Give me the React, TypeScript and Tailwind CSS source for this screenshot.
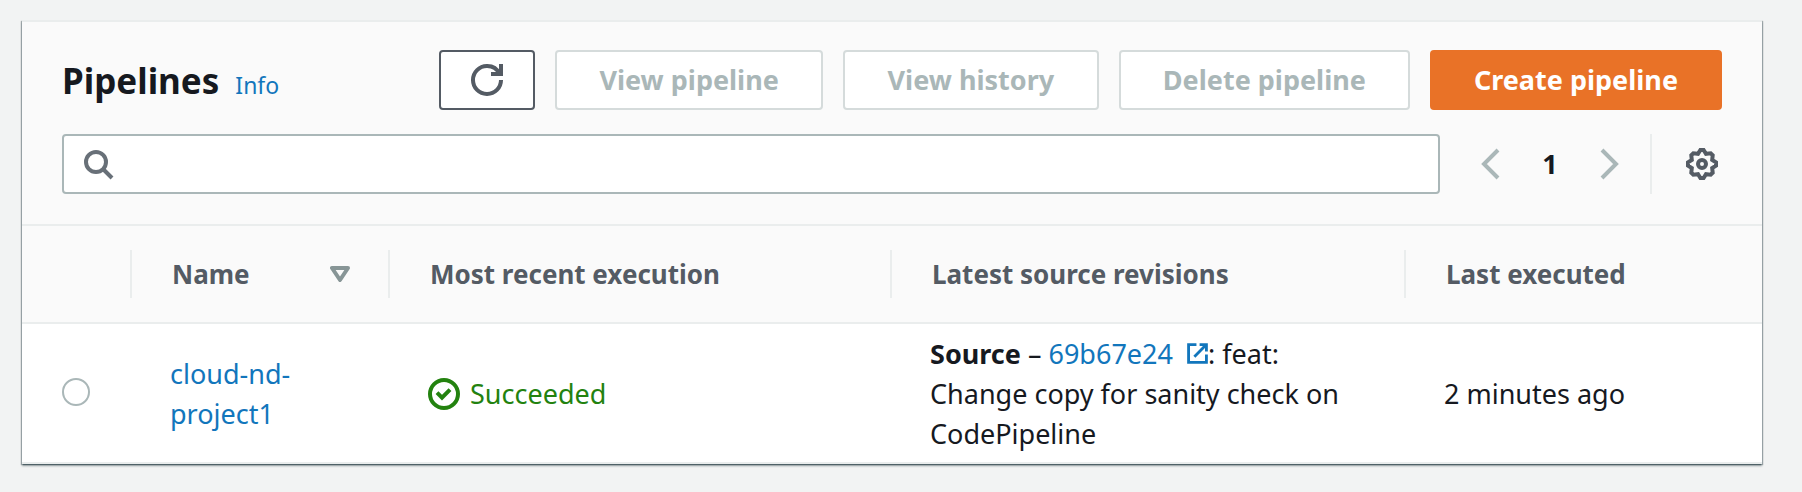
import { useState } from "react";
import type { ReactNode } from "react";

function Icon({ children, className = "size-8" }: { children: ReactNode; className?: string }) {
  return (
    <svg viewBox="0 0 16 16" fill="none" stroke="currentColor" strokeWidth="2" aria-hidden="true" className={className}>
      {children}
    </svg>
  );
}

function SecondaryButton({ children }: { children: ReactNode }) {
  return (
    <button
      type="button"
      disabled
      className="h-[60px] min-w-64 whitespace-nowrap rounded-sm border-2 border-[#d5dbdb] bg-white px-[42px] font-bold text-[#aab7b8]"
    >
      {children}
    </button>
  );
}

function HeaderCell({ children, last = false }: { children?: ReactNode; last?: boolean }) {
  return (
    <th scope="col" className="p-0 text-left font-bold">
      <div
        className={
          last
            ? "flex h-12 items-center justify-between pl-10 pr-[38px]"
            : "flex h-12 items-center justify-between border-r-2 border-[#eaeded] pl-10 pr-[38px]"
        }
      >
        {children}
      </div>
    </th>
  );
}

export default function App() {
  const [query, setQuery] = useState("");
  const [selected, setSelected] = useState(false);

  return (
    <main className="min-h-screen bg-[#f2f3f3] pb-7 pl-[22px] pr-10 pt-5 font-['Noto_Sans',sans-serif] text-[27px] leading-10 text-[#16191f]">
      <section className="border-t-2 border-[#eaeded] bg-white shadow-[0_2px_2px_0_rgba(0,28,36,0.35),1px_1px_1px_0_rgba(0,28,36,0.3),-1px_1px_1px_0_rgba(0,28,36,0.3)]">
        <header className="flex flex-col gap-6 border-b-2 border-[#eaeded] bg-[#fafafa] px-10 pb-[30px] pt-7">
          <div className="flex items-center justify-between gap-5">
            <div className="flex items-baseline gap-4 pt-1.5">
              <h1 className="text-[35px] font-bold">Pipelines</h1>
              <a href="#info" className="text-[23px] text-[#1276bc]">
                Info
              </a>
            </div>
            <div className="flex gap-5">
              <button
                type="button"
                aria-label="Refresh"
                className="flex h-[60px] w-24 items-center justify-center rounded-sm border-2 border-[#545b64] bg-white text-[#545b64]"
              >
                <Icon>
                  <path d="M10 5h5V0" />
                  <path d="M15 8a6.957 6.957 0 0 1-7 7 6.957 6.957 0 0 1-7-7 6.957 6.957 0 0 1 7-7 6.87 6.87 0 0 1 6.3 4" />
                </Icon>
              </button>
              <SecondaryButton>View pipeline</SecondaryButton>
              <SecondaryButton>View history</SecondaryButton>
              <SecondaryButton>Delete pipeline</SecondaryButton>
              <button
                type="button"
                className="h-[60px] whitespace-nowrap rounded-sm border-2 border-[#e97227] bg-[#e97227] px-[42px] font-bold text-white"
              >
                Create pipeline
              </button>
            </div>
          </div>

          <div className="flex items-center">
            <label className="mr-5 flex h-[60px] flex-1 items-center gap-3 rounded-sm border-2 border-[#aab7b8] bg-white px-[18px] text-[#687078]">
              <Icon>
                <circle cx="7" cy="7" r="5" />
                <path d="m15 15-4.5-4.5" />
              </Icon>
              <input
                type="text"
                aria-label="Search pipelines"
                value={query}
                onChange={(e) => setQuery(e.target.value)}
                className="min-w-0 flex-1 bg-transparent text-[#16191f] outline-none"
              />
            </label>
            <nav aria-label="Pagination" className="flex text-[#aab7b8]">
              <button type="button" disabled aria-label="Previous page" className="flex h-[60px] w-[60px] items-center justify-center">
                <Icon>
                  <path d="M12 1 5 8l7 7" />
                </Icon>
              </button>
              <button type="button" aria-current="page" className="h-[60px] w-[60px] font-bold text-[#16191f]">
                1
              </button>
              <button type="button" disabled aria-label="Next page" className="flex h-[60px] w-[60px] items-center justify-center">
                <Icon>
                  <path d="m4 1 7 7-7 7" />
                </Icon>
              </button>
            </nav>
            <div className="ml-[10px] flex h-[60px] items-center border-l-2 border-[#eaeded] pl-[34px] pr-1">
              <button type="button" aria-label="Preferences" className="text-[#545b64]">
                <Icon>
                  <circle cx="8" cy="8" r="2" />
                  <path d="M7.2 1h1.6L10 2.9l2.35-.25 1 1L13.1 6 15 7.2v1.6L13.1 10l.25 2.35-1 1L10 13.1 8.8 15H7.2L6 13.1l-2.35.25-1-1L2.9 10 1 8.8V7.2L2.9 6l-.25-2.35 1-1L6 2.9z" />
                </Icon>
              </button>
            </div>
          </div>
        </header>

        <table className="w-full table-fixed border-collapse">
          <colgroup>
            <col className="w-[110px]" />
            <col className="w-[258px]" />
            <col className="w-[502px]" />
            <col className="w-[514px]" />
            <col />
          </colgroup>
          <thead className="bg-[#fafafa] text-[26px] text-[#545b64]">
            <tr className="h-[97px] border-b-2 border-[#eaeded]">
              <HeaderCell />
              <HeaderCell>
                Name
                <button type="button" aria-label="Sort by name" className="text-[#879596]">
                  <svg viewBox="0 0 20 16" fill="none" stroke="currentColor" strokeWidth="4" strokeLinejoin="round" className="h-4 w-5">
                    <path d="M2 2h16l-8 12z" />
                  </svg>
                </button>
              </HeaderCell>
              <HeaderCell>Most recent execution</HeaderCell>
              <HeaderCell>Latest source revisions</HeaderCell>
              <HeaderCell last>Last executed</HeaderCell>
            </tr>
          </thead>
          <tbody>
            <tr className="border-b-2 border-[#eaeded]">
              <td className="pb-[2px] pl-10 pr-0 pt-0">
                <input
                  type="radio"
                  name="pipeline"
                  aria-label="Select cloud-nd-project1"
                  checked={selected}
                  onChange={() => setSelected(true)}
                  className="block size-7 appearance-none rounded-full border-2 border-[#aab7b8] bg-white checked:border-8 checked:border-[#1276bc]"
                />
              </td>
              <td className="pb-2 pl-[38px] pr-10 pt-[10px]">
                <a href="#cloud-nd-project1" className="text-[#1276bc]">
                  cloud-nd-project1
                </a>
              </td>
              <td className="pb-2 pl-[38px] pr-10 pt-[10px]">
                <span className="flex items-center gap-[10px] text-[#23820f]">
                  <Icon>
                    <circle cx="8" cy="8" r="7" />
                    <path d="M4.5 7.3 7 9.8l4-4" />
                  </Icon>
                  Succeeded
                </span>
              </td>
              <td className="pb-2 pl-[38px] pr-10 pt-[10px]">
                <b>Source</b> –{" "}
                <a href="#69b67e24" className="text-[#1276bc]">
                  69b67e24{" "}
                  <svg viewBox="0 0 20 20" fill="none" stroke="currentColor" strokeWidth="2.7" aria-hidden="true" className="ml-[7px] inline size-[21px] align-baseline">
                    <path d="M9 1.5H1.5v17h17V11" />
                    <path d="M12 1.5h6.5V8M18.5 1.5 7 13" />
                  </svg>
                </a>
                : feat: Change copy for sanity check on CodePipeline
              </td>
              <td className="pb-2 pl-[38px] pr-10 pt-[10px]">2 minutes ago</td>
            </tr>
          </tbody>
        </table>
      </section>
    </main>
  );
}
